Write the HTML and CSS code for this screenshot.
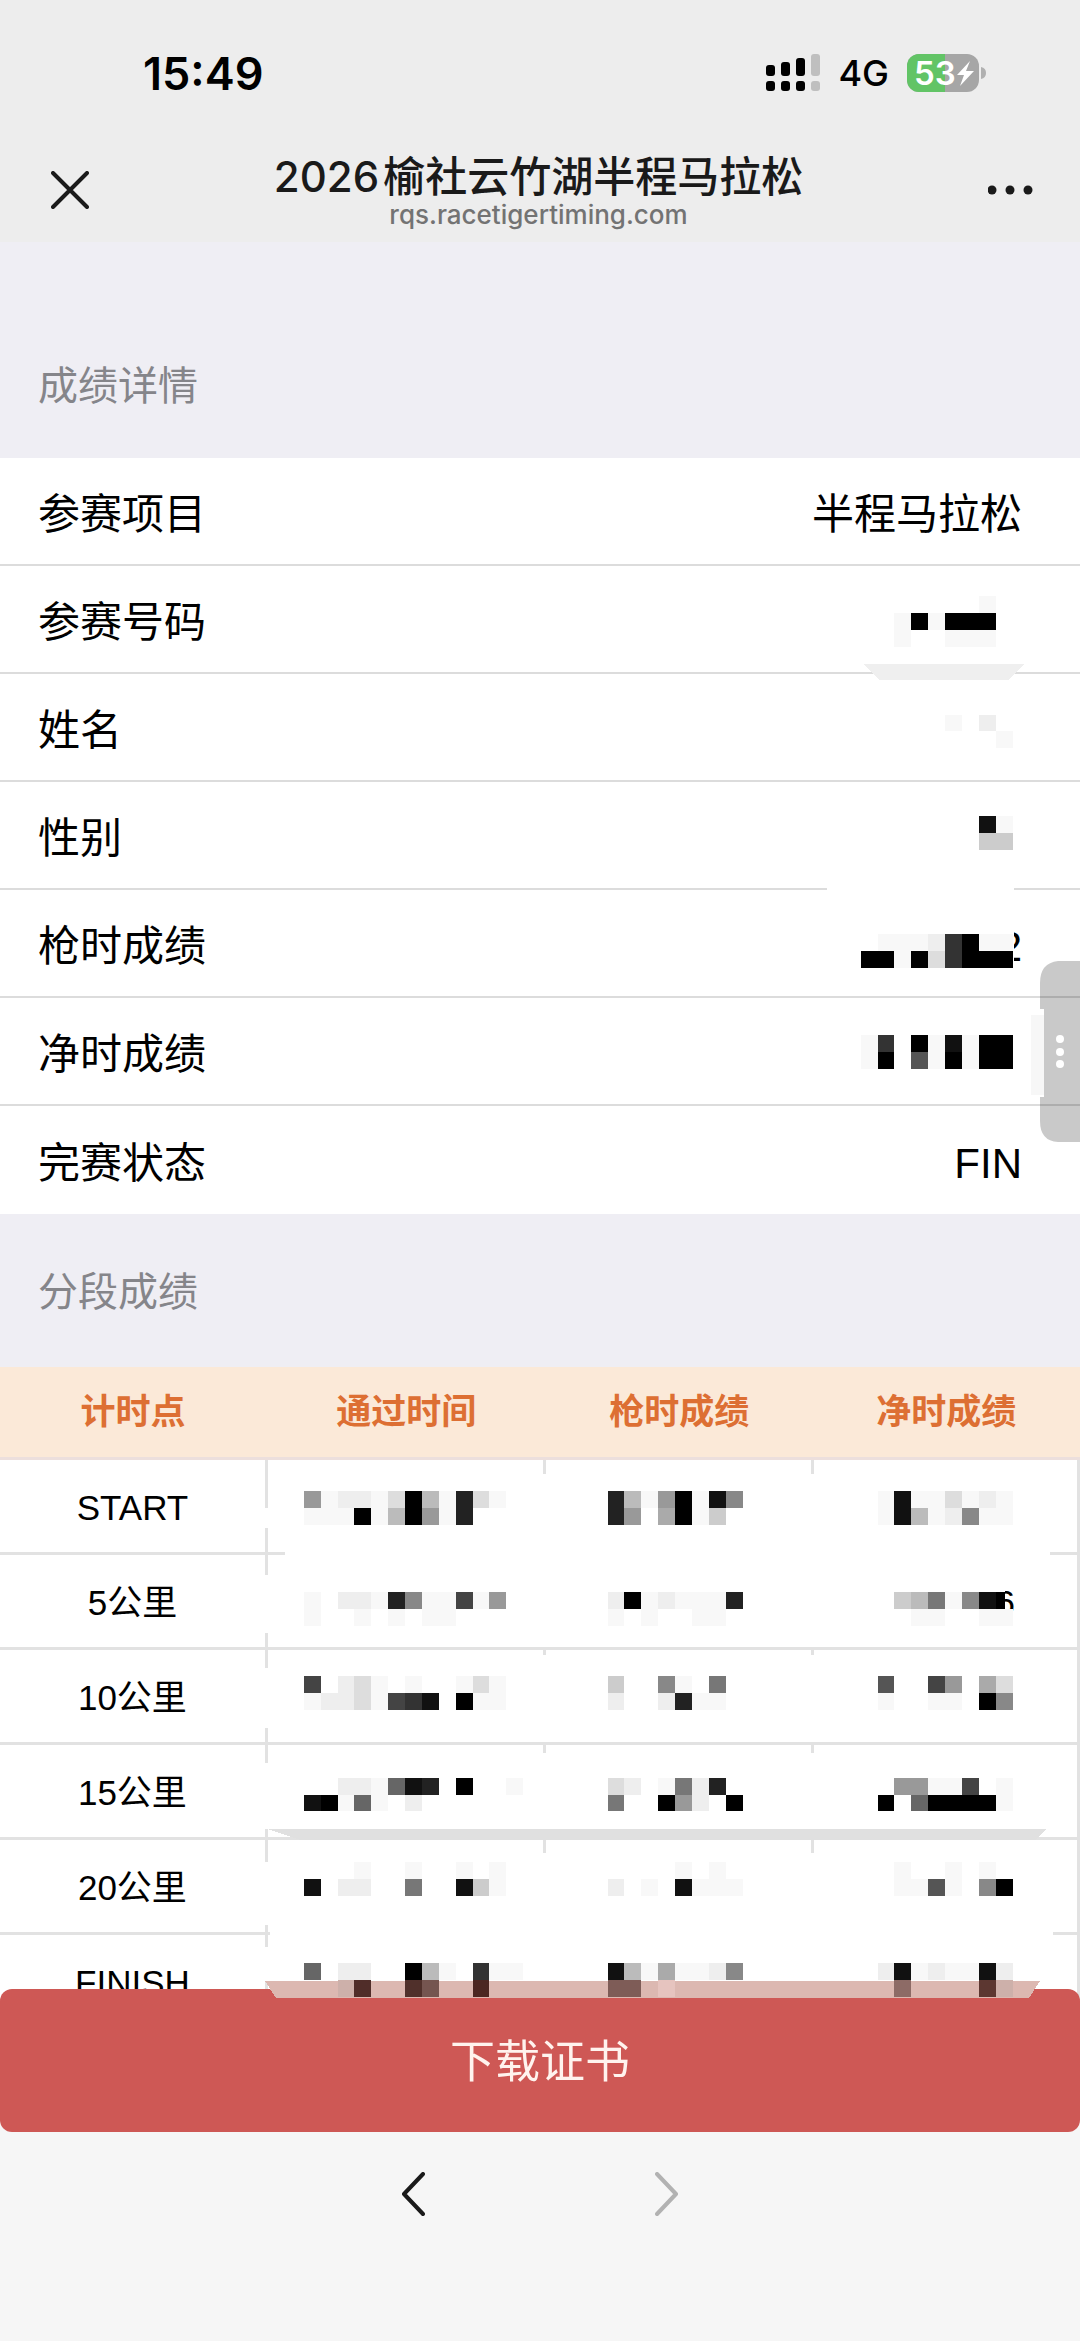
FILE: index.html
```html
<!DOCTYPE html>
<html lang="zh-CN">
<head>
  <meta charset="UTF-8">
  <meta name="viewport" content="width=device-width, initial-scale=1.0">
  <title>2026榆社云竹湖半程马拉松</title>
  <link rel="stylesheet" href="styles.css">
</head>
<body>
  <header class="top">
    <div class="status">
      <span class="clock">15:49</span>
      <div class="status-right">
        <svg class="signal" width="56" height="38" viewBox="0 0 56 38">
          <g fill="#000">
            <rect x="0" y="11" width="9" height="11" rx="3"/>
            <rect x="15" y="8" width="9" height="14" rx="3"/>
            <rect x="30" y="4" width="9" height="18" rx="3"/>
            <rect x="0" y="27" width="9" height="10" rx="3"/>
            <rect x="15" y="27" width="9" height="10" rx="3"/>
            <rect x="30" y="27" width="9" height="10" rx="3"/>
          </g>
          <g fill="#bfbfbf">
            <rect x="45" y="0" width="9" height="22" rx="3"/>
            <rect x="45" y="27" width="9" height="10" rx="3"/>
          </g>
        </svg>
        <span class="network">4G</span>
        <div class="battery">
          <svg width="80" height="38" viewBox="0 0 80 38">
            <rect x="0" y="0" width="72" height="38" rx="12" fill="#a6a6a6"/>
            <path d="M12 0h26v38H12a12 12 0 0 1-12-12V12A12 12 0 0 1 12 0z" fill="#62c466"/>
            <path d="M74 13q5 1 5 6t-5 6z" fill="#b0b0b0"/>
            <path d="M63 7L50 21h7l-4 11 14-15h-8z" fill="#fff"/>
          </svg>
          <span class="battery-text">53</span>
        </div>
      </div>
    </div>
    <nav class="nav">
      <button class="icon-btn" aria-label="关闭">
        <svg width="38" height="38" viewBox="0 0 38 38" fill="none" stroke="#1a1a1a" stroke-width="4" stroke-linecap="round">
          <path d="M2 2l34 34M36 2L2 36"/>
        </svg>
      </button>
      <div class="nav-title">
        <h1><span class="year">2026</span>榆社云竹湖半程马拉松</h1>
        <p>rqs.racetigertiming.com</p>
      </div>
      <button class="icon-btn" aria-label="更多">
        <svg width="46" height="12" viewBox="0 0 46 12" fill="#1a1a1a">
          <circle cx="4" cy="6" r="4.5"/>
          <circle cx="22" cy="6" r="4.5"/>
          <circle cx="40" cy="6" r="4.5"/>
        </svg>
      </button>
    </nav>
  </header>

  <main class="page">
    <h2 class="section-title first">成绩详情</h2>
    <dl class="details">
      <div class="row"><dt>参赛项目</dt><dd>半程马拉松</dd></div>
      <div class="row"><dt>参赛号码</dt><dd></dd></div>
      <div class="row"><dt>姓名</dt><dd></dd></div>
      <div class="row"><dt>性别</dt><dd></dd></div>
      <div class="row"><dt>枪时成绩</dt><dd>2</dd></div>
      <div class="row"><dt>净时成绩</dt><dd></dd></div>
      <div class="row"><dt>完赛状态</dt><dd>FIN</dd></div>
    </dl>

    <h2 class="section-title">分段成绩</h2>
    <table class="splits">
      <colgroup>
        <col class="col-point">
        <col class="col-pass">
        <col class="col-gun">
        <col>
      </colgroup>
      <thead>
        <tr><th>计时点</th><th>通过时间</th><th>枪时成绩</th><th>净时成绩</th></tr>
      </thead>
      <tbody>
        <tr><td>START</td><td></td><td></td><td></td></tr>
        <tr><td>5公里</td><td></td><td></td><td class="tail">6</td></tr>
        <tr><td>10公里</td><td></td><td></td><td></td></tr>
        <tr><td>15公里</td><td></td><td></td><td></td></tr>
        <tr><td>20公里</td><td></td><td></td><td></td></tr>
        <tr><td>FINISH</td><td></td><td></td><td></td></tr>
      </tbody>
    </table>

    <!-- mosaic over the private values -->
    <svg class="mosaic" id="mosaic" viewBox="0 0 1080 1770" aria-hidden="true"></svg>

    <svg class="handle" width="50" height="182" viewBox="0 0 50 182" aria-hidden="true">
      <path d="M50 0H28Q10 2 10 22V48H14V136H10V160Q10 180 28 181H50z" fill="#000" fill-opacity="0.21"/>
      <rect x="1" y="54" width="13" height="80" fill="#f7f7f7"/>
      <g fill="#fff">
        <circle cx="30" cy="78" r="4"/>
        <circle cx="30" cy="91" r="4"/>
        <circle cx="30" cy="103" r="4"/>
      </g>
    </svg>
  </main>

  <footer class="bottom">
    <button class="download">下载证书</button>
    <div class="toolbar">
      <button class="icon-btn" aria-label="后退">
        <svg width="24" height="44" viewBox="0 0 24 44" fill="none" stroke="#1a1a1a" stroke-width="4" stroke-linecap="round" stroke-linejoin="round">
          <path d="M22 2L3 22l19 20"/>
        </svg>
      </button>
      <button class="icon-btn" aria-label="前进" disabled>
        <svg width="24" height="44" viewBox="0 0 24 44" fill="none" stroke="#b2b2b2" stroke-width="4" stroke-linecap="round" stroke-linejoin="round">
          <path d="M2 2l19 20L2 42"/>
        </svg>
      </button>
    </div>
  </footer>

  <script src="mosaic.js"></script>
</body>
</html>
```

FILE: styles.css
```css
* {
  box-sizing: border-box;
}
body {
  margin: 0;
  background-color: #f6f6f6;
  color: #000;
  font-family: 'Liberation Sans', 'Noto Sans CJK SC', sans-serif;
}
h1, h2, p, dl, dd {
  margin: 0;
  font-weight: 400;
}
button {
  border: none;
  padding: 0;
  background: none;
  font-family: inherit;
  cursor: pointer;
}

/* Top bars */
.top {
  background-color: #ededed;
  font-family: Inter, 'Noto Sans CJK SC', sans-serif;
}
.status {
  display: flex;
  justify-content: space-between;
  align-items: center;
  height: 146px;
  padding: 0 93px 0 143px;
}
.clock {
  font-size: 45px;
  font-weight: 600;
}
.status-right {
  display: flex;
  align-items: center;
}
.network {
  margin: 0 18px 0 16px;
  font-size: 36px;
  font-weight: 500;
}
.battery {
  display: flex;
  position: relative;
}
.battery-text {
  position: absolute;
  top: 0;
  left: 7px;
  color: #fff;
  font-size: 33px;
  font-weight: 600;
  line-height: 38px;
}
.nav {
  display: flex;
  justify-content: space-between;
  align-items: center;
  height: 96px;
  padding: 0 46px 8px 51px;
}
.icon-btn {
  display: flex;
  align-items: center;
}
.nav-title {
  text-align: center;
}
.nav-title h1 {
  color: #1a1a1a;
  font-size: 42px;
  font-weight: 500;
  line-height: 50px;
}
.year {
  margin-right: 4px;
}
.nav-title p {
  color: #737373;
  font-size: 26px;
  font-weight: 500;
  line-height: 26px;
}

/* Result details */
.page {
  position: relative;
  background-color: #efeef4;
}
.section-title {
  padding: 48px 38px 45px;
  color: #85858a;
  font-size: 40px;
  line-height: 60px;
}
.section-title.first {
  padding: 114px 38px 42px;
}
.details {
  background-color: #fff;
  font-size: 42px;
  line-height: 60px;
}
.row {
  display: flex;
  justify-content: space-between;
  align-items: center;
  height: 108px;
  padding: 8px 58px 0 38px;
  border-bottom: 2px solid #dcdcdc;
}
.row:last-child {
  border-bottom: none;
}

/* Split times */
.splits {
  width: 100%;
  border-collapse: separate;
  border-spacing: 0;
  table-layout: fixed;
  background-color: #fff;
  font-size: 35px;
  line-height: 48px;
  text-align: center;
}
.col-point {
  width: 24.8%;
}
.col-pass {
  width: 25.8%;
}
.col-gun {
  width: 24.8%;
}
.splits th {
  height: 93px;
  padding: 0 2px 0 0;
  border-bottom: 3px solid #ecdfdd;
  background-color: #fbe9d8;
  color: #dd6f33;
  font-weight: 700;
}
.splits td {
  height: 95px;
  padding: 4px 0 0;
  border-right: 3px solid #e2e2e2;
  border-bottom: 3px solid #e2e2e2;
}
.splits .tail {
  padding-right: 62px;
  text-align: right;
}

/* Overlays */
.mosaic {
  position: absolute;
  top: 0;
  left: 0;
  z-index: 2;
  width: 100%;
  pointer-events: none;
}
.handle {
  position: absolute;
  top: 719px;
  right: 0;
  z-index: 3;
}

/* Bottom bars */
.bottom {
  position: fixed;
  bottom: 0;
  left: 0;
  z-index: 1;
  width: 100%;
}
.download {
  display: block;
  width: 100%;
  height: 143px;
  padding-bottom: 4px;
  border-radius: 12px;
  background-color: #ce5855;
  color: #fff3ee;
  font-size: 45px;
}
.toolbar {
  display: flex;
  justify-content: center;
  gap: 230px;
  height: 209px;
  padding-bottom: 85px;
  background-color: #f6f6f6;
}
```

FILE: mosaic.js
```js
const mosaic = document.getElementById('mosaic');
const CELL = 16.875;

// white patches: x, y, width, height
const patches = [
  [827, 640, 187, 90],
  [285, 1304, 765, 14],
  [270, 1683, 783, 14],
  [264, 1266, 5, 20],
  [264, 1333, 5, 58],
  [264, 1426, 5, 60],
  [264, 1521, 5, 66],
  [264, 1620, 5, 63],
  [264, 1705, 5, 34],
  [540, 1232, 12, 173],
  [540, 1413, 12, 87],
  [540, 1511, 12, 76],
  [540, 1611, 12, 128],
  [807, 1232, 12, 173],
  [807, 1413, 12, 87],
  [807, 1511, 12, 76],
  [807, 1611, 12, 128],
  [860, 1340, 145, 60]
];

// column, row, one hex digit of grey for each cell
const blocks = [
  [58, 21, 'f'], [53, 22, 'f0f000'], [53, 23, 'f..fff'],
  [56, 28, 'f.e'], [59, 29, 'f'],
  [58, 34, '1f'], [58, 35, 'cc'],
  [52, 41, 'fffe30ff'], [51, 42, '00f0d3000'],
  [51, 47, 'f3.0f1f00'], [51, 48, 'f0.5f0f00'],

  [18, 74, '9feefd0bf2df'], [18, 75, 'fff0fb09f2'],
  [36, 74, '2bf90f18'], [36, 75, '29.a0fc'],
  [52, 74, 'f1ffdfef'], [52, 75, 'f1bfe8ff'],

  [18, 80, 'f.eef28ff4f9'], [18, 81, 'f..f.f.ff'],
  [36, 80, 'e0fefff2'], [36, 81, 'f.f..ff'],
  [53, 80, 'cb7f81'], [54, 81, 'ff..ff'],

  [18, 85, '4.edf.f..fdf'], [18, 86, 'feedf431.0ff'],
  [36, 85, 'c..8f.7'], [36, 86, 'e..e2ff'],
  [52, 85, '5..49.ad'], [52, 86, 'f..ff.08'],

  [18, 91, '..eef612.0..f'], [18, 92, '10f6f.e'],
  [36, 91, 'de.f7e2'], [36, 92, '7..09e.0'],
  [52, 91, '.99ff4.f'], [52, 92, '0.60000f'],

  [18, 96, '...f..f..f.f'], [18, 97, '1.ee..7..1cf'],
  [36, 96, '....f.f'], [36, 97, 'e.f.1fff'],
  [52, 96, '.f..f.f'], [52, 97, '.ff5f.80'],

  [18, 102, '6.ee..0bf.3ff'],
  [36, 102, '1bfaffe8'],
  [52, 102, 'e1feff1e']
];

// last row lies over the button: column, width in cells, colour
const tinted = [
  [20, 1, '#cdb0aa'], [21, 1, '#502d29'], [24, 1, '#50302b'], [25, 1, '#755550'],
  [28, 1, '#4c2722'], [36, 2, '#7e5c57'], [39, 1, '#e6c4bf'], [53, 1, '#8d6b66'],
  [58, 1, '#5c3731'], [59, 1, '#cdb0aa']
];

let out = '';

function rect(x, y, w, h, fill) {
  out += `<rect x="${x}" y="${y}" width="${w}" height="${h}" fill="${fill}"/>`;
}

patches.forEach(([x, y, w, h]) => rect(x, y, w, h, '#fff'));

out += '<path d="M863 422H1025L1008 438H880z" fill="#efefef"/>';
out += '<path d="M268 1587H1046L1036 1598H300z" fill="#e0e0e0"/>';
out += '<path d="M265 1739H1040L1029 1756H276z" fill="#dcb8b1"/>';

blocks.forEach(([col, row, shades]) => {
  [...shades].forEach((shade, i) => {
    if (shade === '.') return;
    const fill = shade === 'f' ? '#f8f8f8' : '#' + shade.repeat(3);
    rect((col + i) * CELL, row * CELL, CELL, CELL, fill);
  });
});
rect(59 * CELL, 80 * CELL, 9, CELL, '#000');

tinted.forEach(([col, n, fill]) => rect(col * CELL, 103 * CELL, n * CELL, CELL, fill));

mosaic.innerHTML = `<g shape-rendering="crispEdges">${out}</g>`;
```
